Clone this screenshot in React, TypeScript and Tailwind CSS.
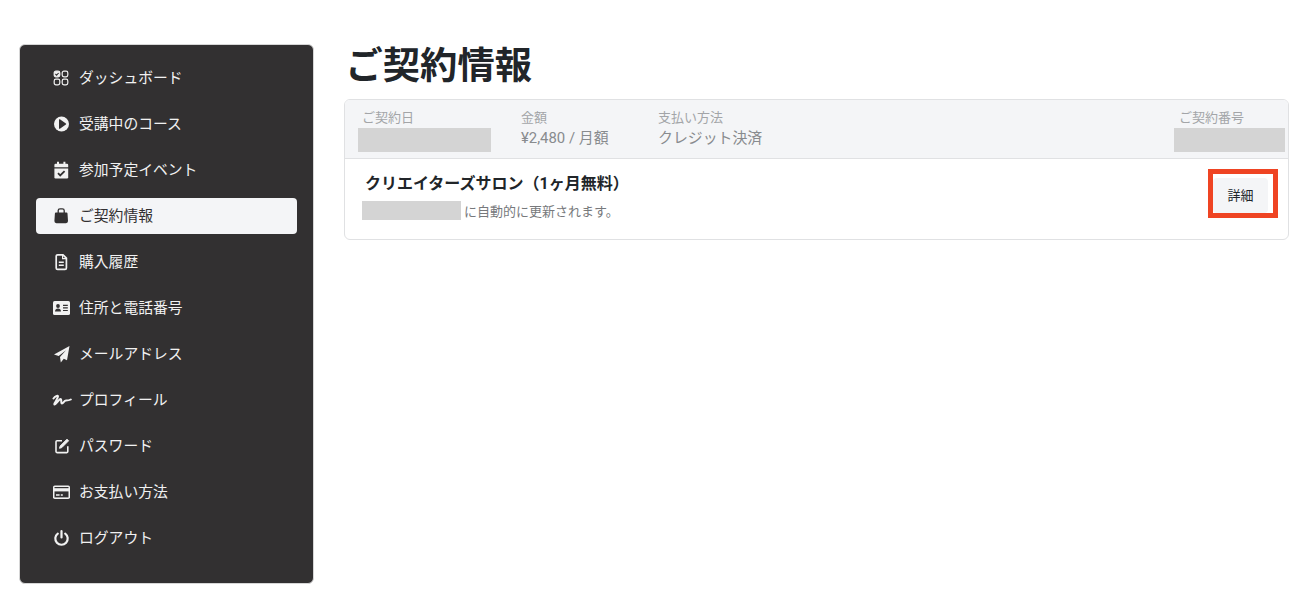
import React from 'react';

const IconDashboard = () => (
  <svg width="18" height="18" viewBox="0 0 18 18" fill="none" stroke="currentColor" strokeWidth="1.2">
    <rect x="2.2" y="2.2" width="5.6" height="5.6" rx="1.7" fill="currentColor" />
    <path d="M3.4 5l1.2 1.2 2-2.2" stroke="#323031" strokeWidth="1.1" />
    <rect x="10.2" y="2.2" width="5.6" height="5.6" rx="1.7" />
    <rect x="2.2" y="10.2" width="5.6" height="5.6" rx="1.7" />
    <rect x="10.2" y="10.2" width="5.6" height="5.6" rx="1.7" />
  </svg>
);

const IconPlay = () => (
  <svg width="18" height="18" viewBox="0 0 18 18">
    <circle cx="9.5" cy="9" r="7.5" fill="currentColor" />
    <path d="M7 4.8a.6.6 0 0 1 .9-.5l6 4.2a.6.6 0 0 1 0 1l-6 4.2a.6.6 0 0 1-.9-.5z" fill="#323031" />
  </svg>
);

const IconCalendar = () => (
  <svg width="18" height="18" viewBox="0 0 18 18" fill="currentColor">
    <path d="M5 .8h2v2h4.400v-2h2v2H15a1.200 1.200 0 0 1 1.200 1.200v2.200H2.400V4A1.200 1.200 0 0 1 3.600 2.800H5z" />
    <path d="M2.400 7.600h13.800v8.600a1.200 1.200 0 0 1-1.200 1.200H3.600a1.200 1.200 0 0 1-1.200-1.200z" />
    <path d="M6 12.200l2.200 2.200 4.400-4.300" fill="none" stroke="#323031" strokeWidth="1.800" />
  </svg>
);

const IconBag = () => (
  <svg width="18" height="18" viewBox="0 0 18 18">
    <path d="M6.200 6.500V3.600a1.800 1.800 0 0 1 1.800-1.800h2.400a1.800 1.800 0 0 1 1.800 1.800v2.900" fill="none" stroke="#323031" strokeWidth="1.300" />
    <path d="M3.900 5.600h10.600a1 1 0 0 1 1 .9l.5 7.600a2 2 0 0 1-2 2.100H4.400a2 2 0 0 1-2-2.100l.5-7.600a1 1 0 0 1 1-.9z" fill="#323031" />
  </svg>
);

const IconFile = () => (
  <svg width="18" height="18" viewBox="0 0 18 18" fill="none" stroke="currentColor" strokeWidth="1.700">
    <path d="M5.600 1.800h5.400l3.400 3.400v9.800a1.400 1.400 0 0 1-1.400 1.400H5.600A1.400 1.400 0 0 1 4.200 15V3.200a1.400 1.400 0 0 1 1.400-1.400z" />
    <path d="M6.800 9.200h5M6.800 12.200h5" strokeWidth="1.400" />
    <path d="M10.600 2v3.600h3.600" strokeWidth="1.200" />
  </svg>
);

const IconIdCard = () => (
  <svg width="18" height="18" viewBox="0 0 18 18">
    <rect x="1" y="2" width="17" height="14" rx="1.600" fill="currentColor" />
    <circle cx="6" cy="7" r="1.900" fill="#323031" />
    <path d="M3 12.600c0-1.900 1.300-3 3-3s3 1.100 3 3z" fill="#323031" />
    <path d="M11 6.300h4.800M11 8.900h4.800M11 11.500h4.800" stroke="#323031" strokeWidth="1.200" />
  </svg>
);

const IconPlane = () => (
  <svg width="18" height="18" viewBox="0 0 18 18" fill="currentColor">
    <path d="M17.500 1L2 9.500l4.700 1.500L14 5.200 8 12l.8 5.500 3-3.800 3.200 1.500z" />
  </svg>
);

const IconSignature = () => (
  <svg width="20" height="18" viewBox="0 0 20 18" fill="none" stroke="currentColor" strokeWidth="2" strokeLinejoin="round" strokeLinecap="round">
    <path d="M1.500 7.500C3 5.500 6 3.800 6 5.500 6 7.500 1.500 13 2.500 13.500 3.500 14 7 8 8.500 8 10 8 8.500 12.500 10 12.500 11.500 12.500 12 9.500 14 9.500 15.500 9.500 17 9.500 18.800 8.500" />
  </svg>
);

const IconEdit = () => (
  <svg width="18" height="18" viewBox="0 0 18 18" fill="none" stroke="currentColor" strokeWidth="1.600">
    <path d="M10 3.800H5a1 1 0 0 0-1 1V14.600a1 1 0 0 0 1 1h9.800a1 1 0 0 0 1-1V9.200" />
    <path d="M15 2.200l1.600 1.600-6.800 6.800-2.300.7.700-2.300z" fill="currentColor" strokeWidth="1" />
  </svg>
);

const IconCard = () => (
  <svg width="18" height="18" viewBox="0 0 18 18">
    <rect x="1" y="2.500" width="17" height="13.500" rx="1.800" fill="currentColor" />
    <rect x="2.500" y="4" width="14" height="1.200" fill="#323031" />
    <rect x="2.500" y="8.400" width="14" height="6" fill="#323031" />
    <path d="M4 12h3.600M8.800 12h2" stroke="currentColor" strokeWidth="1.400" />
  </svg>
);

const IconPower = () => (
  <svg width="18" height="18" viewBox="0 0 18 18" fill="none" stroke="currentColor" strokeWidth="2.200" strokeLinecap="round">
    <path d="M5.800 4.600a6.200 6.200 0 1 0 7.400 0" />
    <path d="M9.500 2v6.400" />
  </svg>
);

const menuItems = [
  { label: 'ダッシュボード', icon: <IconDashboard /> },
  { label: '受講中のコース', icon: <IconPlay /> },
  { label: '参加予定イベント', icon: <IconCalendar /> },
  { label: 'ご契約情報', icon: <IconBag />, active: true },
  { label: '購入履歴', icon: <IconFile /> },
  { label: '住所と電話番号', icon: <IconIdCard /> },
  { label: 'メールアドレス', icon: <IconPlane /> },
  { label: 'プロフィール', icon: <IconSignature /> },
  { label: 'パスワード', icon: <IconEdit /> },
  { label: 'お支払い方法', icon: <IconCard /> },
  { label: 'ログアウト', icon: <IconPower /> },
];

const App: React.FC = () => {
  return (
    <div className="flex items-start w-[1308px] h-[614px] bg-white pt-[44px] pl-[19px] pr-[19px] font-['Roboto','Noto_Sans_CJK_JP',sans-serif] text-[#212529] overflow-hidden">
      {/* Sidebar */}
      <nav className="w-[295px] h-[540px] shrink-0 bg-[#323031] border border-[#d6d6d6] rounded-md pt-[15px] px-4 flex flex-col gap-2.5">
        {menuItems.map((item) => (
          <a
            key={item.label}
            href="#"
            className={
              item.active
                ? 'flex items-center h-9 pl-4 rounded bg-[#f4f5f7] text-[#323031] text-[14.8px]'
                : 'flex items-center h-9 pl-4 rounded text-[#f1f1f1] text-[14.8px]'
            }
          >
            <span className="w-[27px] shrink-0 flex">{item.icon}</span>
            <span>{item.label}</span>
          </a>
        ))}
      </nav>

      {/* Main */}
      <main className="flex-1 ml-[30px]">
        <h1 className="text-[37.3px] leading-[40px] font-bold text-[#212529] pl-[1.5px] pt-[2px] mb-[13px]">ご契約情報</h1>

        <div className="border border-[#e0e1e3] rounded-md overflow-hidden h-[141px]">
          {/* Header */}
          <div className="flex h-[59px] bg-[#f4f5f7] border-b border-[#e0e1e3] pt-[8px] pl-[13px] pr-[3px] text-[#888b8e]">
            <div className="w-[163px]">
              <p className="pl-[4px] text-[13px] leading-[19px] text-[#a3a5a8]">ご契約日</p>
              <div className="w-[133px] h-[24px] mt-[1px] bg-[#d4d4d4]" />
            </div>
            <div className="w-[137px]">
              <p className="text-[13px] leading-[19px] text-[#a3a5a8]">金額</p>
              <p className="text-[14.9px] leading-[22px]">¥2,480 / 月額</p>
            </div>
            <div className="flex-1">
              <p className="text-[13px] leading-[19px] text-[#a3a5a8]">支払い方法</p>
              <p className="text-[14.9px] leading-[22px]">クレジット決済</p>
            </div>
            <div className="w-[111px]">
              <p className="pl-[5px] text-[13px] leading-[19px] text-[#a3a5a8]">ご契約番号</p>
              <div className="w-[111px] h-[24px] mt-[1px] bg-[#d4d4d4]" />
            </div>
          </div>

          {/* Body */}
          <div className="flex items-start justify-between pl-[17px] pr-[10px] pt-[10px]">
            <div className="pt-[4px]">
              <p className="pl-[3px] text-[16px] leading-[22px] font-bold text-[#212529]">クリエイターズサロン（1ヶ月無料）</p>
              <div className="flex items-start mt-[6px]">
                <div className="w-[99px] h-[19px] bg-[#d4d4d4]" />
                <span className="ml-[3px] pt-[1px] text-[13px] leading-[19px] text-[#77797c]">に自動的に更新されます。</span>
              </div>
            </div>
            <div className="border-[5px] border-[#ef4423] shrink-0 w-[70px] h-[49px] bg-white">
              <button className="block w-[55px] h-[35px] mt-[4px] bg-[#f4f5f7] rounded text-[13px] text-[#212529]">詳細</button>
            </div>
          </div>
        </div>
      </main>
    </div>
  );
};

export default App;
